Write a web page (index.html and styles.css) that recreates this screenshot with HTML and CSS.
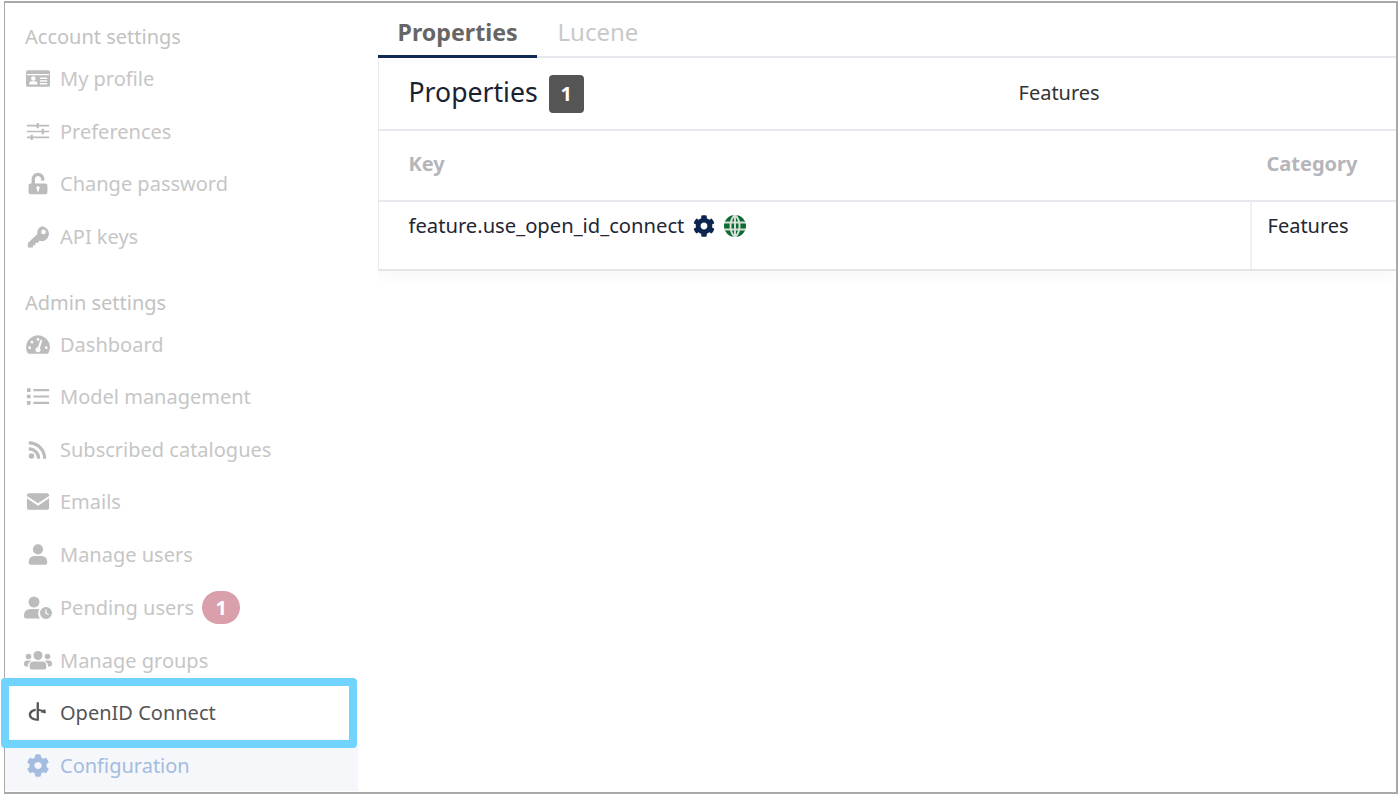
FILE: index.html
```html
<!DOCTYPE html>
<html lang="en">
<head>
<meta charset="utf-8">
<title>Properties</title>
<link rel="stylesheet" href="styles.css">
</head>
<body>
<div class="frame">
  <nav class="sidebar">
    <div class="heading first">Account settings</div>
    <a class="item"><svg class="icon" viewBox="0 0 26 20"><path fill-rule="evenodd" d="M2 1h22a2 2 0 0 1 2 2v14a2 2 0 0 1-2 2H2a2 2 0 0 1-2-2V3a2 2 0 0 1 2-2zM1 5v1.500h24V5zM8 7.500a2.500 2.500 0 1 0 0 5 2.500 2.500 0 0 0 0-5zM3.500 16.500h9c.4-2.200-1.500-3.500-2.500-3.500H6c-1 0-2.900 1.300-2.500 3.500zM15 9v1.500h8V9zM15 12v1.500h8V12zM15 15v1.500h8V15z"/></svg><span>My profile</span></a>
    <a class="item"><svg class="icon" viewBox="0 0 26 20"><path d="M1 2.800h24v1.800H1zM1 9.100h24v1.800H1zM1 15.400h24v1.800H1z"/><path d="M11.500 0.800h2.400v5.800h-2.400zM17 7.100h2.400v5.800H17zM5 13.400h2.400v5.800H5z"/></svg><span>Preferences</span></a>
    <a class="item"><svg class="icon" viewBox="-60 -10 568 532"><path fill-rule="evenodd" d="M400 256H152V152.900c0-39.600 31.700-72.500 71.300-72.900 40-.4 72.700 32.100 72.700 72v16c0 13.300 10.700 24 24 24h32c13.300 0 24-10.700 24-24v-16C376 68 307.500-.3 223.500 0 139.500.3 72 69.500 72 153.500V256H48c-26.500 0-48 21.500-48 48v160c0 26.500 21.500 48 48 48h352c26.500 0 48-21.500 48-48V304c0-26.500-21.500-48-48-48zM224 320a40 40 0 0 0-24 72v32a24 24 0 0 0 48 0v-32a40 40 0 0 0-24-72z"/></svg><span>Change password</span></a>
    <a class="item"><svg class="icon" viewBox="0 0 26 22"><path fill-rule="evenodd" d="M17 0a8 8 0 1 1-2.300 15.700L12.500 18H10v2.500H7.500V23H2v-5l10.300-9.800A8 8 0 0 1 17 0zm2 3.500a2.500 2.500 0 1 0 0 5 2.500 2.500 0 0 0 0-5z"/></svg><span>API keys</span></a>

    <div class="heading">Admin settings</div>
    <a class="item"><svg class="icon" viewBox="0 0 26 20"><path fill-rule="evenodd" d="M13 0a13 13 0 0 1 11.200 19.500 1.500 1.500 0 0 1-1.200.5H3a1.500 1.500 0 0 1-1.200-.5A13 13 0 0 1 13 0zm2.500 5.500l-2.600 7.500a2.800 2.800 0 0 0-2.600 3.200c.2 1.400 1.400 2.300 2.700 2.300a2.800 2.800 0 0 0 2-4.700l2.500-7.500a1 1 0 0 0-2-.8zM13 3a1.500 1.500 0 1 0 0 3 1.500 1.500 0 0 0 0-3zM6.500 6a1.500 1.500 0 1 0 0 3 1.500 1.500 0 0 0 0-3zM4 12a1.500 1.500 0 1 0 0 3 1.500 1.500 0 0 0 0-3zm18 0a1.500 1.500 0 1 0 0 3 1.500 1.500 0 0 0 0-3z"/></svg><span>Dashboard</span></a>
    <a class="item"><svg class="icon" viewBox="0 0 26 20"><path d="M1 1h4v4H1zM1 8h4v4H1zM1 15h4v4H1zM8 1.800h17v2.400H8zM8 8.800h17v2.400H8zM8 15.800h17v2.400H8z"/></svg><span>Model management</span></a>
    <a class="item"><svg class="icon" viewBox="0 0 26 22"><circle cx="6" cy="18" r="3"/><path d="M3 8.500v3.500a9 9 0 0 1 9 9h3.500A12.500 12.500 0 0 0 3 8.500z"/><path d="M3 2v3.500A15.500 15.500 0 0 1 18.500 21H22A19 19 0 0 0 3 2z"/></svg><span>Subscribed catalogues</span></a>
    <a class="item"><svg class="icon" viewBox="0 0 26 20"><path d="M3 1h20a2 2 0 0 1 2 2v1L13 12 1 4V3a2 2 0 0 1 2-2z"/><path d="M1 6.500v10.500a2 2 0 0 0 2 2h20a2 2 0 0 0 2-2V6.500L13 14.500z"/></svg><span>Emails</span></a>
    <a class="item"><svg class="icon" viewBox="0 0 26 22"><circle cx="13" cy="5.500" r="5.500"/><path d="M9 12.500h8a6 6 0 0 1 6 6V20a2 2 0 0 1-2 2H5a2 2 0 0 1-2-2v-1.500a6 6 0 0 1 6-6z"/></svg><span>Manage users</span></a>
    <a class="item pending"><svg class="icon wide" viewBox="0 0 28 22"><circle cx="10" cy="5.500" r="5.500"/><path d="M6.500 12.500h7c.7 0 1.300.1 1.800.3a8 8 0 0 0 .7 9.200H2a2 2 0 0 1-2-2v-1.500a6 6 0 0 1 6.500-6z"/><path fill-rule="evenodd" d="M22 10.500a6 6 0 1 1 0 12 6 6 0 0 1 0-12zM21.300 13v4l3 1.800.6-1-2.400-1.400V13z"/></svg><span>Pending users</span><b class="pill">1</b></a>
    <a class="item"><svg class="icon wide" viewBox="0 0 28 20"><circle cx="14" cy="5" r="4.500"/><circle cx="4.500" cy="6" r="2.800"/><circle cx="23.500" cy="6" r="2.800"/><path d="M9.500 11h9a3.800 3.800 0 0 1 3.800 3.800V17a2 2 0 0 1-2 2H7.700a2 2 0 0 1-2-2v-2.200A3.800 3.800 0 0 1 9.500 11z"/><path d="M3 10h3c.5 0 .9.100 1.300.3A6 6 0 0 0 4 14.500V16H2a2 2 0 0 1-2-2v-1a3 3 0 0 1 3-3zM22 10h3a3 3 0 0 1 3 3v1a2 2 0 0 1-2 2h-2v-1.500a6 6 0 0 0-3.300-4.200c.4-.2.800-.3 1.300-.3z"/></svg><span>Manage groups</span></a>
    <a class="item focus"><svg class="icon" viewBox="0 0 26 24"><path d="M11.500 1h2.500v20h-2.500C6 20.500 3 17.800 3 14.500 3 11 6 8.500 10.500 8v2.300C7.500 10.800 5.500 12.400 5.500 14.500c0 2.100 2 3.700 6 4.200z"/><path d="M14 8.200c1.800.1 3.400.6 4.500 1.200L21 8.500l.5 4.500-6-1.200 1.500-.8c-.8-.3-1.800-.5-3-.6z"/></svg><span>OpenID Connect</span></a>
    <a class="item active"><svg class="icon" viewBox="0 0 512 512"><path d="M487.400 315.700l-42.600-24.600c4.300-23.200 4.300-47 0-70.200l42.600-24.600c4.900-2.800 7.100-8.600 5.500-14-11.100-35.600-30-67.800-54.700-94.600-3.800-4.100-10-5.100-14.800-2.300L380.800 110c-17.900-15.400-38.500-27.300-60.800-35.100V25.800c0-5.600-3.900-10.500-9.400-11.700-36.700-8.200-74.300-7.800-109.200 0-5.500 1.200-9.400 6.100-9.400 11.700V75c-22.200 7.900-42.800 19.800-60.800 35.100L88.700 85.500c-4.900-2.800-11-1.900-14.800 2.300-24.700 26.700-43.600 58.900-54.700 94.600-1.700 5.400.6 11.200 5.500 14L67.300 221c-4.300 23.200-4.300 47 0 70.200l-42.600 24.600c-4.900 2.800-7.100 8.600-5.500 14 11.100 35.600 30 67.800 54.700 94.600 3.800 4.100 10 5.100 14.800 2.300l42.600-24.600c17.900 15.400 38.500 27.300 60.800 35.100v49.200c0 5.600 3.900 10.500 9.400 11.700 36.700 8.200 74.300 7.800 109.200 0 5.500-1.200 9.400-6.100 9.400-11.700v-49.200c22.200-7.900 42.800-19.800 60.800-35.100l42.600 24.600c4.900 2.800 11 1.900 14.800-2.300 24.700-26.700 43.600-58.900 54.700-94.600 1.500-5.500-.7-11.300-5.600-14.100zM256 336c-44.100 0-80-35.900-80-80s35.900-80 80-80 80 35.900 80 80-35.900 80-80 80z"/></svg><span>Configuration</span></a>
  </nav>

  <main class="content">
    <div class="tabs">
      <div class="tab current">Properties</div>
      <div class="tab">Lucene</div>
    </div>
    <section class="card">
      <header class="card-head">
        <div class="title-wrap"><h1>Properties</h1><span class="count">1</span></div>
        <div class="filter">Features</div>
      </header>
      <div class="row row-head">
        <div class="cell key">Key</div>
        <div class="cell cat">Category</div>
      </div>
      <div class="row row-body">
        <div class="cell key divided">
          <span>feature.use_open_id_connect</span>
          <svg class="mini cog" viewBox="0 0 512 512"><path d="M487.400 315.700l-42.600-24.600c4.300-23.200 4.300-47 0-70.200l42.600-24.600c4.900-2.800 7.100-8.600 5.500-14-11.100-35.600-30-67.800-54.700-94.600-3.800-4.100-10-5.100-14.800-2.300L380.800 110c-17.900-15.400-38.500-27.300-60.800-35.100V25.800c0-5.600-3.900-10.500-9.400-11.700-36.700-8.200-74.300-7.800-109.200 0-5.500 1.200-9.400 6.100-9.400 11.700V75c-22.200 7.900-42.800 19.800-60.800 35.100L88.700 85.500c-4.900-2.800-11-1.900-14.800 2.300-24.700 26.700-43.600 58.900-54.700 94.600-1.700 5.400.6 11.200 5.500 14L67.300 221c-4.300 23.200-4.300 47 0 70.200l-42.600 24.600c-4.900 2.800-7.100 8.600-5.500 14 11.100 35.600 30 67.800 54.700 94.600 3.800 4.100 10 5.100 14.800 2.300l42.600-24.600c17.900 15.400 38.500 27.300 60.800 35.100v49.200c0 5.600 3.900 10.500 9.400 11.700 36.700 8.200 74.300 7.800 109.200 0 5.500-1.200 9.400-6.100 9.400-11.700v-49.200c22.200-7.900 42.800-19.800 60.800-35.100l42.600 24.600c4.900 2.800 11 1.900 14.800-2.300 24.700-26.700 43.600-58.900 54.700-94.600 1.500-5.500-.7-11.300-5.600-14.100zM256 336c-44.100 0-80-35.900-80-80s35.900-80 80-80 80 35.900 80 80-35.900 80-80 80z"/></svg>
          <svg class="mini globe" viewBox="0 0 22 22"><circle cx="11" cy="11" r="11"/><path class="globe-lines" d="M0 7.500h22M0 14.500h22M11 0v22M11 0C5 5 5 17 11 22M11 0c6 5 6 17 0 22"/></svg>
        </div>
        <div class="cell cat plain">Features</div>
      </div>
    </section>
  </main>
  <div class="highlight"></div>
</div>
</body>
</html>
```

FILE: styles.css
```css
* { box-sizing: border-box; }
html, body { margin: 0; height: 795px; overflow: hidden; background: #fff; }
body { font-family: "Noto Sans", "Liberation Sans", sans-serif; padding: 1px 2px 1px 4px; }

.frame {
  position: relative;
  display: flex;
  height: 793px;
  border: 2px solid #a9a9a9;
  border-left-width: 1.5px;
  background: #fff;
}

.sidebar { flex: 0 0 352.5px; padding-top: 18px; }
.heading {
  margin-top: 24px;
  padding-left: 20px;
  height: 31.5px;
  line-height: 31.5px;
  font-size: 20px;
  color: #c2c2c2;
}
.heading.first { margin-top: 0; }
.item {
  display: flex;
  align-items: center;
  height: 52.5px;
  padding-left: 21px;
  font-size: 20px;
  color: #c6c6c6;
}
.icon { width: 24px; height: 23px; fill: #bcbcbc; margin-right: 10px; flex: none; }
.icon.wide { width: 28px; margin-left: -2px; margin-right: 8px; }
.pending { margin-top: .75px; }
.pill {
  width: 38px;
  height: 33px;
  margin-left: 8px;
  border-radius: 17px;
  background: #d99faa;
  color: #fff;
  font-size: 20px;
  line-height: 33px;
  text-align: center;
}
.focus { color: #555; }
.focus .icon { fill: #555; }
.active { color: #a3bcdf; background: #f5f7fa; }
.active .icon { fill: #a3bcdf; }

.content { flex: 1; min-width: 0; margin-left: 20px; overflow: hidden; }
.tabs { display: flex; height: 55px; border-bottom: 2px solid #e7e9ee; }
.tab {
  width: 159px;
  padding: 13px 0 0 20px;
  font-size: 23.2px;
  line-height: 32px;
  font-weight: 400;
  color: #c9c9c9;
}
.tab + .tab { padding-left: 21px; width: auto; font-size: 24px; }
.tab.current {
  font-weight: 700;
  color: #666;
  height: 55px;
  border-bottom: 3px solid #0e2a55;
}

.card { border-left: 1px solid #e7e9ee; box-shadow: 0 6px 12px rgba(0,0,0,.03); }
.card-head {
  display: flex;
  align-items: center;
  height: 73px;
  border-bottom: 2px solid #e7e9ee;
  padding-left: 30px;
}
.title-wrap { display: flex; align-items: center; width: 610px; }
h1 { margin: 0 0 3px; font-size: 26.6px; font-weight: 400; color: #1a2230; }
.count {
  width: 35px;
  height: 38px;
  margin: 1px 0 0 11px;
  border-radius: 4px;
  background: #555;
  color: #fff;
  font-size: 20px;
  font-weight: 700;
  line-height: 38px;
  text-align: center;
}
.filter { font-size: 20px; color: #333; margin-bottom: 2px; }

.row { display: flex; }
.row-head { height: 71px; align-items: center; padding-bottom: 5px; border-bottom: 2px solid #e7e9ee; font-size: 20px; font-weight: 700; color: #b5b5ba; }
.row-body { height: 69px; border-bottom: 2px solid #e4e5e8; font-size: 20.2px; color: #1f2733; }
.cell.key { flex: 0 0 873px; padding-left: 30px; }
.cell.cat { padding-left: 16px; white-space: nowrap; }
.row-head .cell.cat { padding-left: 15px; }
.divided { display: flex; align-items: flex-start; padding-top: 9px; border-right: 2px solid #eef0f4; }
.plain { padding-top: 10px; font-size: 20px; }
.mini { width: 22px; height: 22px; margin-top: 4px; flex: none; }
.cog { fill: #0b2550; margin-left: 9px; }
.globe { fill: #0c6b33; margin-left: 9px; }
.globe-lines { fill: none; stroke: #d8dfd8; stroke-width: 2; }

.highlight {
  position: absolute;
  left: -4px;
  top: 675px;
  width: 356px;
  height: 70px;
  border: 8px solid #70d4ff;
  border-radius: 4px;
}
```
